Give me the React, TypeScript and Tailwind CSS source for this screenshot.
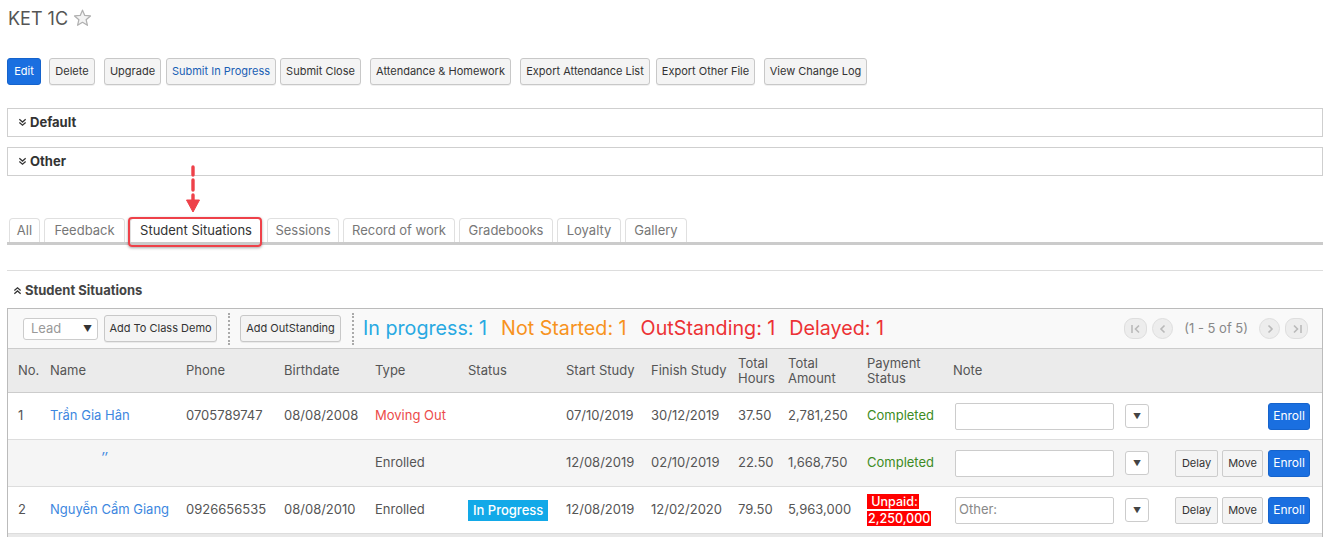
import React from "react";

const F = { fontFamily: "Inter, 'Liberation Sans', Arial, sans-serif" };

function Btn({ children, className = "", color = "text-[#333]" }: { children: React.ReactNode; className?: string; color?: string }) {
  return (
    <button
      className={`h-[27px] text-[11px] border border-[#c8c8c8] rounded-[3px] bg-[#f4f4f4] shadow-[0_1px_0_rgba(0,0,0,0.06)] whitespace-nowrap ${color} ${className}`}
    >
      {children}
    </button>
  );
}

function Chevrons({ up = false }: { up?: boolean }) {
  return (
    <svg width="9" height="9" viewBox="0 0 10 10" className={up ? "rotate-180" : ""}>
      <path d="M1.5 1.5 L5 4.5 L8.5 1.5 M1.5 5 L5 8 L8.5 5" stroke="#333" strokeWidth="1.4" fill="none" />
    </svg>
  );
}

function Panel({ title }: { title: string }) {
  return (
    <div className="h-[29px] border border-[#cfcfcf] flex items-center pl-[10px] gap-[3px] text-[13px] font-bold text-[#333]">
      <Chevrons />
      <span>{title}</span>
    </div>
  );
}

const tabs = ["All", "Feedback", "Student Situations", "Sessions", "Record of work", "Gradebooks", "Loyalty", "Gallery"];
const tabW = [31, 81, 132, 72, 112, 94, 64, 62];
const tabML = [2, 4, 5, 5, 4, 4, 4, 4];

function SmallSelect() {
  return (
    <div className="w-[24px] h-[24px] border border-[#ccc] rounded-[3px] bg-white flex items-center justify-center text-[8px] text-[#444]">
      ▼
    </div>
  );
}

function NoteCell({ placeholder, actions }: { placeholder?: string; actions: boolean }) {
  return (
    <div className="flex items-center pl-[12px] pr-[12px] h-full">
      <div className="w-[159px] h-[27px] border border-[#ccc] rounded-[2px] bg-white flex items-center pl-[3px] text-[13px] text-[#888]">
        {placeholder}
      </div>
      <div className="ml-[11px]">
        <SmallSelect />
      </div>
      <div className="flex-1" />
      {actions && (
        <>
          <button className="w-[43px] h-[27px] text-[11px] border border-[#ccc] rounded-[2px] bg-[#f4f4f4] text-[#333]">Delay</button>
          <button className="ml-[4px] w-[41px] h-[27px] text-[11px] border border-[#ccc] rounded-[2px] bg-[#f4f4f4] text-[#333]">Move</button>
        </>
      )}
      <button className="ml-[5px] w-[42px] h-[27px] text-[12px] rounded-[3px] bg-[#1a6fe0] text-white border border-[#1563cc]">Enroll</button>
    </div>
  );
}

const grid = "grid grid-cols-[32px_136px_98px_91px_93px_98px_85px_87px_50px_79px_86px_1fr]";

function PagerBtn({ children, pill = false }: { children: React.ReactNode; pill?: boolean }) {
  return (
    <div
      className={`h-[21px] ${pill ? "w-[23px] rounded-[9px]" : "w-[21px] rounded-full"} bg-[#ededed] border border-[#dedede] flex items-center justify-center`}
    >
      {children}
    </div>
  );
}

const pc = "#b9b9b9";

export default function App() {
  return (
    <div style={F} className="w-[1325px] h-[537px] overflow-hidden bg-white pl-[7px] pr-[2px] text-[#555]">
      {/* Title */}
      <div className="h-[36px] flex items-center gap-[5px] pl-[1px]">
        <span className="text-[18px] text-[#555]">KET 1C</span>
        <svg width="19" height="18" viewBox="0 0 24 23">
          <path
            d="M12 1.5 L14.9 8.3 L22.2 8.9 L16.6 13.7 L18.3 20.8 L12 17 L5.7 20.8 L7.4 13.7 L1.8 8.9 L9.1 8.3 Z"
            fill="#f3f3f3"
            stroke="#b0b0b0"
            strokeWidth="1.6"
            strokeLinejoin="round"
          />
        </svg>
      </div>

      {/* Action buttons */}
      <div className="mt-[22px] flex items-center">
        <button className="h-[27px] w-[34px] text-[11px] rounded-[3px] bg-[#1a6fe0] text-white border border-[#1563cc]">Edit</button>
        <Btn className="ml-[8px] w-[46px]">Delete</Btn>
        <Btn className="ml-[9px] w-[57px]">Upgrade</Btn>
        <Btn className="ml-[5px] w-[110px]" color="text-[#1a5fb4]">Submit In Progress</Btn>
        <Btn className="ml-[4px] w-[81px]">Submit Close</Btn>
        <Btn className="ml-[9px] w-[141px]">Attendance &amp; Homework</Btn>
        <Btn className="ml-[9px] w-[130px]">Export Attendance List</Btn>
        <Btn className="ml-[6px] w-[99px]">Export Other File</Btn>
        <Btn className="ml-[9px] w-[103px]">View Change Log</Btn>
      </div>

      <div className="mt-[23px]">
        <Panel title="Default" />
      </div>
      <div className="mt-[10px]">
        <Panel title="Other" />
      </div>

      {/* Tabs */}
      <div className="relative mt-[42px]">
        <div className="flex items-end h-[24px]">
          {tabs.map((t, i) => (
            <div
              key={t}
              style={{ width: tabW[i], marginLeft: tabML[i] }}
              className={`h-[24px] border border-b-0 border-[#e0e0e0] rounded-t-[4px] bg-white flex items-center justify-center text-[13px] ${
                i === 2 ? "text-[#333]" : "text-[#777]"
              }`}
            >
              {t}
            </div>
          ))}
        </div>
        <div className="h-[3px] bg-[#cbcbcb]" />
        {/* Highlight box */}
        <div className="absolute left-[121px] top-[-1px] w-[134px] h-[30px] border-[2.5px] border-[#ee4149] rounded-[4px] shadow-[0_1px_3px_rgba(0,0,0,0.35)]" />
        {/* Arrow */}
        <svg className="absolute left-[176px] top-[-53px]" width="20" height="50" viewBox="0 0 20 50">
          <path d="M10 2 V10 M10 15 V25 M10 30 V36" stroke="#ee4149" strokeWidth="3.4" strokeLinecap="round" />
          <path d="M3.5 35 L16.5 35 L10 47 Z" fill="#ee4149" stroke="#ee4149" strokeWidth="1" strokeLinejoin="round" />
        </svg>
      </div>

      <div className="mt-[25px] h-px bg-[#ddd]" />

      <div className="h-[37px] flex items-center gap-[3px] pl-[6px] pt-[2px] text-[13px] font-bold text-[#444]">
        <Chevrons up />
        <span>Student Situations</span>
      </div>

      {/* Table container */}
      <div className="border border-[#bbb] border-b-0">
        {/* Toolbar */}
        <div className="h-[40px] bg-[#f9f9f9] border-b border-[#ccc] flex items-center pl-[15px] pr-[12px]">
          <div className="w-[75px] h-[22px] border border-[#ccc] rounded-[3px] bg-white flex items-center justify-between pl-[7px] pr-[5px] text-[13px] text-[#999]">
            <span>Lead</span>
            <span className="text-[9px] text-[#333]">▼</span>
          </div>
          <Btn className="ml-[6px] w-[113px]">Add To Class Demo</Btn>
          <div className="ml-[11px] h-[32px] border-dotted border-[#aaa] border-l-[2px]" />
          <Btn className="ml-[10px] w-[101px]">Add OutStanding</Btn>
          <div className="ml-[11px] h-[32px] border-dotted border-[#aaa] border-l-[2px]" />
          <div className="ml-[9px] flex items-center gap-[14px] text-[19.7px]">
            <span className="text-[#29a9e2]">In progress: 1</span>
            <span className="text-[#f7931e]">Not Started: 1</span>
            <span className="text-[#ec3235]">OutStanding: 1</span>
            <span className="text-[#ec3235]">Delayed: 1</span>
          </div>
          <div className="flex-1" />
          <div className="flex items-center gap-[5px] mr-[2px]">
            <PagerBtn pill>
              <svg width="12" height="10" viewBox="0 0 12 10">
                <path d="M2 1 V9" stroke={pc} strokeWidth="1.6" />
                <path d="M9 1.5 L5.5 5 L9 8.5" stroke={pc} strokeWidth="1.6" fill="none" />
              </svg>
            </PagerBtn>
            <PagerBtn>
              <svg width="10" height="10" viewBox="0 0 10 10">
                <path d="M6.5 1.5 L3 5 L6.5 8.5" stroke={pc} strokeWidth="1.6" fill="none" />
              </svg>
            </PagerBtn>
            <span className="text-[13px] text-[#888] mx-[6px]">(1 - 5 of 5)</span>
            <PagerBtn>
              <svg width="10" height="10" viewBox="0 0 10 10">
                <path d="M3.5 1.5 L7 5 L3.5 8.5" stroke={pc} strokeWidth="1.6" fill="none" />
              </svg>
            </PagerBtn>
            <PagerBtn pill>
              <svg width="12" height="10" viewBox="0 0 12 10">
                <path d="M3 1.5 L6.5 5 L3 8.5" stroke={pc} strokeWidth="1.6" fill="none" />
                <path d="M10 1 V9" stroke={pc} strokeWidth="1.6" />
              </svg>
            </PagerBtn>
          </div>
        </div>

        {/* Header */}
        <div className={`${grid} h-[44px] bg-[#ebebeb] border-b border-[#ccc] text-[13px] text-[#555] items-center`}>
          <div className="pl-[10px]">No.</div>
          <div className="pl-[10px]">Name</div>
          <div className="pl-[10px]">Phone</div>
          <div className="pl-[10px]">Birthdate</div>
          <div className="pl-[10px]">Type</div>
          <div className="pl-[10px]">Status</div>
          <div className="pl-[10px]">Start Study</div>
          <div className="pl-[10px]">Finish Study</div>
          <div className="pl-[10px] leading-[15px]">
            Total
            <br />
            Hours
          </div>
          <div className="pl-[10px] leading-[15px]">
            Total
            <br />
            Amount
          </div>
          <div className="pl-[10px] leading-[15px]">
            Payment
            <br />
            Status
          </div>
          <div className="pl-[10px]">Note</div>
        </div>

        {/* Row 1 */}
        <div className={`${grid} h-[47px] bg-white border-b border-[#ddd] text-[13px] text-[#555] items-center`}>
          <div className="pl-[10px]">1</div>
          <div className="pl-[10px] text-[#3d87e0]">Trần Gia Hân</div>
          <div className="pl-[10px]">0705789747</div>
          <div className="pl-[10px]">08/08/2008</div>
          <div className="pl-[10px] text-[#ec4b4b]">Moving Out</div>
          <div />
          <div className="pl-[10px]">07/10/2019</div>
          <div className="pl-[10px]">30/12/2019</div>
          <div className="pl-[10px]">37.50</div>
          <div className="pl-[10px]">2,781,250</div>
          <div className="pl-[10px] text-[#3d8b24]">Completed</div>
          <NoteCell actions={false} />
        </div>

        {/* Row 2 */}
        <div className={`${grid} h-[47px] bg-[#f5f5f5] border-b border-[#ddd] text-[13px] text-[#555] items-center`}>
          <div />
          <div className="pl-[61px] self-start pt-[7px] text-[#3d87e0] italic text-[14px]">″</div>
          <div />
          <div />
          <div className="pl-[10px]">Enrolled</div>
          <div />
          <div className="pl-[10px]">12/08/2019</div>
          <div className="pl-[10px]">02/10/2019</div>
          <div className="pl-[10px]">22.50</div>
          <div className="pl-[10px]">1,668,750</div>
          <div className="pl-[10px] text-[#3d8b24]">Completed</div>
          <NoteCell actions />
        </div>

        {/* Row 3 */}
        <div className={`${grid} h-[47px] bg-white border-b border-[#ddd] text-[13px] text-[#555] items-center`}>
          <div className="pl-[10px]">2</div>
          <div className="pl-[10px] text-[#3d87e0] whitespace-nowrap">Nguyễn Cẩm Giang</div>
          <div className="pl-[10px]">0926656535</div>
          <div className="pl-[10px]">08/08/2010</div>
          <div className="pl-[10px]">Enrolled</div>
          <div className="pl-[10px]">
            <span className="inline-block bg-[#12a9e8] text-white text-[13px] font-medium px-[5px] leading-[21px]">In Progress</span>
          </div>
          <div className="pl-[10px]">12/08/2019</div>
          <div className="pl-[10px]">12/02/2020</div>
          <div className="pl-[10px]">79.50</div>
          <div className="pl-[10px]">5,963,000</div>
          <div className="pl-[10px] leading-[17.5px]">
            <span className="bg-[#ff0000] text-white text-[12.5px] font-medium px-[1px] box-decoration-clone">
              &nbsp;Unpaid:
              <br />
              2,250,000
            </span>
          </div>
          <NoteCell actions placeholder="Other:" />
        </div>
        <div className="h-[4px] bg-[#e9e9e9]" />
      </div>
    </div>
  );
}
